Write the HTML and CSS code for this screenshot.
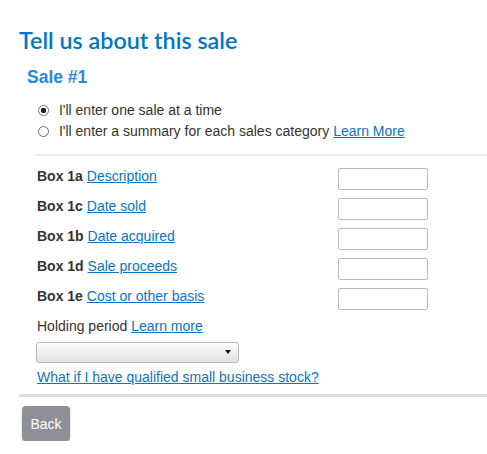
FILE: index.html
```html
<!DOCTYPE html>
<html lang="en">
<head>
<meta charset="utf-8">
<title>Tell us about this sale</title>
<link rel="stylesheet" href="styles.css">
</head>
<body>
<main class="page">
  <h1 class="title">Tell us about this sale</h1>
  <section class="sale">
    <h2 class="sale-title">Sale #1</h2>
    <div class="options">
      <label class="option"><input class="radio" type="radio" name="mode" checked> I'll enter one sale at a time</label>
      <label class="option"><input class="radio" type="radio" name="mode"> I'll enter a summary for each sales category <a class="link" href="#">Learn More</a></label>
    </div>
    <div class="details">
      <div class="fields">
        <div class="field-row"><span class="field-label"><b>Box 1a</b> <a class="link" href="#">Description</a></span><input class="field-input" type="text"></div>
        <div class="field-row"><span class="field-label"><b>Box 1c</b> <a class="link" href="#">Date sold</a></span><input class="field-input" type="text"></div>
        <div class="field-row"><span class="field-label"><b>Box 1b</b> <a class="link" href="#">Date acquired</a></span><input class="field-input" type="text"></div>
        <div class="field-row"><span class="field-label"><b>Box 1d</b> <a class="link" href="#">Sale proceeds</a></span><input class="field-input" type="text"></div>
        <div class="field-row"><span class="field-label"><b>Box 1e</b> <a class="link" href="#">Cost or other basis</a></span><input class="field-input" type="text"></div>
      </div>
      <p class="holding">Holding period <a class="link" href="#">Learn more</a></p>
      <div class="select-wrap"><select class="holding-select"><option></option></select></div>
      <p class="qsbs"><a class="link" href="#">What if I have qualified small business stock?</a></p>
    </div>
  </section>
  <div class="footer">
    <button class="back" type="button">Back</button>
  </div>
</main>
</body>
</html>
```

FILE: styles.css
```css
html, body {
  margin: 0;
  padding: 0;
  background: #fff;
}

.page {
  padding: 26px 0 0 19px;
  font-family: "Liberation Sans", Arial, sans-serif;
  font-size: 14px;
  line-height: 16px;
  color: #333;
}

.title {
  margin: 0 0 13px 0;
  font-family: Lato, "Liberation Sans", sans-serif;
  font-weight: 600;
  font-size: 23.3px;
  line-height: 28px;
  color: #0077c5;
}

.sale {
  padding-left: 8px;
}

.sale-title {
  margin: 0 0 13px 0;
  font-size: 17.5px;
  line-height: 20px;
  font-weight: bold;
  color: #2b88da;
}

.options {
  display: flex;
  flex-direction: column;
  padding-left: 11px;
  margin-bottom: 12px;
}

.option {
  display: flex;
  align-items: center;
  line-height: 21px;
  white-space: pre;
}

.radio {
  appearance: none;
  -webkit-appearance: none;
  width: 11px;
  height: 11px;
  margin: 0 6px 0 0;
  border: 1px solid #6e6e6e;
  border-radius: 50%;
  background: #fff;
  box-sizing: border-box;
}

.radio:checked {
  background: radial-gradient(circle, #222 0 2.6px, #fff 3px);
}

.link {
  color: #0a74c8;
  text-decoration: underline;
}

.details {
  margin-left: 7px;
  border-top: 2px solid #ececec;
  padding: 12px 0 0 3px;
}

.fields {
  display: flex;
  flex-direction: column;
  gap: 8px;
}

.field-row {
  display: grid;
  grid-template-columns: 301px 90px;
  align-items: start;
}

.field-label b {
  color: #333;
}

.field-input {
  box-sizing: border-box;
  width: 90px;
  height: 22px;
  margin: 0;
  border: 1px solid #bcbcbc;
  border-radius: 2px;
  background: #fff;
}

.holding {
  margin: 8px 0 8px 0;
}

.select-wrap {
  position: relative;
  width: 203px;
  margin-left: -1px;
}

.holding-select {
  appearance: none;
  -webkit-appearance: none;
  display: block;
  box-sizing: border-box;
  width: 203px;
  height: 21px;
  margin: 0;
  border: 1px solid #b9b9b9;
  border-radius: 3px;
  background: linear-gradient(#fbfbfb, #e3e3e3);
}

.select-wrap::after {
  content: "";
  position: absolute;
  right: 8px;
  top: 8px;
  border-left: 3.5px solid transparent;
  border-right: 3.5px solid transparent;
  border-top: 4px solid #111;
}

.qsbs {
  margin: 6px 0 0 0;
}

.footer {
  margin-top: 9px;
  border-top: 3px solid #dcdcdc;
  padding-top: 9px;
  padding-left: 3px;
}

.back {
  width: 48px;
  height: 35px;
  padding: 0;
  border: none;
  border-radius: 4px;
  background: #8d9096;
  color: #fff;
  font-family: "Liberation Sans", Arial, sans-serif;
  font-size: 14px;
  box-shadow: 0 1px 2px rgba(0,0,0,0.25);
}
```
